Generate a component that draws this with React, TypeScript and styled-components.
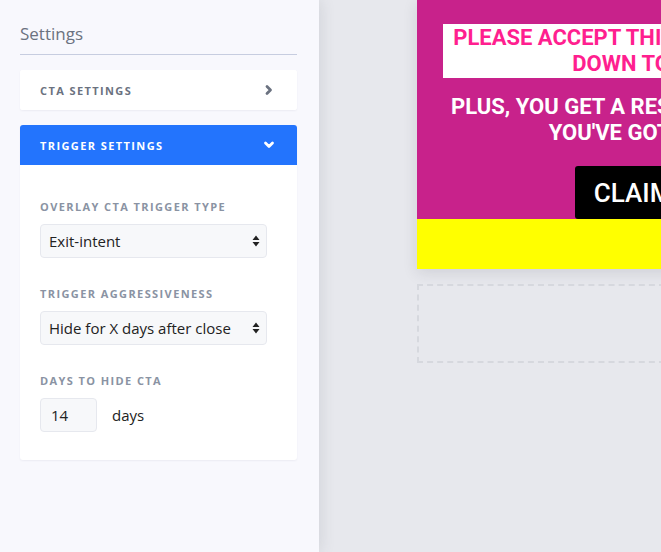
import styled, { createGlobalStyle } from "styled-components";

const Global = createGlobalStyle`
  html, body { margin: 0; padding: 0; height: 100%; }
  body { font-family: "Open Sans", "Liberation Sans", sans-serif; }
  #root { height: 100%; }
`;

const Page = styled.div`
  display: flex;
  width: 661px;
  height: 552px;
  overflow: hidden;
`;

const Sidebar = styled.aside`
  width: 319px;
  flex-shrink: 0;
  background: #f8f8fd;
  padding: 22px 22px 0 20px;
  box-sizing: border-box;
  position: relative;
  z-index: 1;
  box-shadow: 2px 0 14px rgba(60, 64, 80, 0.12);
`;

const Heading = styled.h2`
  margin: 0;
  font-size: 17px;
  font-weight: 400;
  color: #6b7280;
  line-height: 24px;
  padding-bottom: 8px;
  border-bottom: 1px solid #c7cde0;
`;

const Panel = styled.div`
  margin-top: 15px;
  background: #fff;
  border-radius: 3px;
  box-shadow: 0 1px 2px rgba(30, 40, 80, 0.06);
  overflow: hidden;
`;

const PanelHead = styled.div<{ $active?: boolean }>`
  height: 40px;
  display: flex;
  align-items: center;
  justify-content: space-between;
  padding: 0 22px 0 20px;
  background: ${(p) => (p.$active ? "#2374fd" : "#fff")};
  color: ${(p) => (p.$active ? "#fff" : "#6b7280")};
  font-size: 11px;
  font-weight: 700;
  letter-spacing: 1.4px;
  text-transform: uppercase;
`;

const PanelBody = styled.div`
  padding: 35px 20px 28px;
`;

const Field = styled.div`
  & + & { margin-top: 29px; }
`;

const Label = styled.div`
  font-size: 11px;
  font-weight: 700;
  letter-spacing: 1.4px;
  color: #8a93a3;
  text-transform: uppercase;
  line-height: 14px;
  margin-bottom: 10px;
`;

const SelectBox = styled.div`
  width: 227px;
  height: 34px;
  box-sizing: border-box;
  border: 1px solid #e6e8ee;
  border-radius: 4px;
  background: #f7f8fa;
  display: flex;
  align-items: center;
  justify-content: space-between;
  padding: 0 5px 0 8px;
  font-size: 15px;
  color: #222;
`;

const Row = styled.div`
  display: flex;
  align-items: center;
  gap: 15px;
  font-size: 15px;
  color: #222;
`;

const NumberBox = styled.div`
  width: 57px;
  height: 34px;
  box-sizing: border-box;
  border: 1px solid #e6e8ee;
  border-radius: 4px;
  background: #f7f8fa;
  display: flex;
  align-items: center;
  padding-left: 10px;
  font-size: 15px;
`;

const Canvas = styled.main`
  flex: 1;
  background: #e7e8ed;
  padding-left: 98px;
  overflow: hidden;
`;

const Widget = styled.div`
  width: 500px;
  box-shadow: 0 4px 14px rgba(40, 40, 60, 0.12);
`;

const Promo = styled.div`
  background: #c8228b;
  padding: 24px 26px 0;
  display: flex;
  flex-direction: column;
  align-items: center;
  font-family: Roboto, "Liberation Sans", sans-serif;
  font-weight: 700;
  text-transform: uppercase;
  white-space: nowrap;
`;

const Offer = styled.div`
  align-self: stretch;
  background: #fff;
  color: #ff1f8f;
  font-size: 22px;
  line-height: 26px;
  text-align: center;
  padding: 1px 0;
`;

const SubLine = styled.div`
  color: #fff;
  font-size: 22px;
  line-height: 26px;
  text-align: center;
  margin-top: 16px;
`;

const Claim = styled.div`
  margin-top: 20px;
  background: #000;
  color: #fff;
  border-radius: 3px;
  font-size: 26px;
  font-weight: 500;
  height: 53px;
  display: flex;
  align-items: center;
  padding: 0 21px 0 19px;
`;

const Strip = styled.div`
  height: 50px;
  background: #ffff00;
`;

const DropZone = styled.div`
  margin-top: 15px;
  width: 500px;
  height: 79px;
  box-sizing: border-box;
  border: 2px dashed #d6d8de;
`;

const Chevron = ({ down, color }: { down?: boolean; color: string }) => (
  <svg width="12" height="12" viewBox="0 0 12 12">
    <path
      d={down ? "M2.5 4 L6 7.5 L9.5 4" : "M4 2.5 L7.5 6 L4 9.5"}
      fill="none"
      stroke={color}
      strokeWidth="2.8"
      strokeLinecap="round"
      strokeLinejoin="round"
    />
  </svg>
);

const Updown = () => (
  <svg width="10" height="16" viewBox="0 0 10 16">
    <path d="M5 2.5 L8.5 7 H1.5 Z M5 13.5 L8.5 9 H1.5 Z" fill="#222" />
  </svg>
);

export default function App() {
  return (
    <Page>
      <Global />
      <Sidebar>
        <Heading>Settings</Heading>
        <Panel>
          <PanelHead>
            CTA Settings
            <Chevron color="#6b7280" />
          </PanelHead>
        </Panel>
        <Panel>
          <PanelHead $active>
            Trigger Settings
            <Chevron down color="#fff" />
          </PanelHead>
          <PanelBody>
            <Field>
              <Label>Overlay CTA trigger type</Label>
              <SelectBox>
                Exit-intent
                <Updown />
              </SelectBox>
            </Field>
            <Field>
              <Label>Trigger aggressiveness</Label>
              <SelectBox>
                Hide for X days after close
                <Updown />
              </SelectBox>
            </Field>
            <Field>
              <Label>Days to hide CTA</Label>
              <Row>
                <NumberBox>14</NumberBox>
                days
              </Row>
            </Field>
          </PanelBody>
        </Panel>
      </Sidebar>
      <Canvas>
        <Widget>
          <Promo>
            <Offer>
              Please accept this special discount
              <br />
              down to 50% off
            </Offer>
            <SubLine>
              Plus, you get a resource kit for free
              <br />
              you've got this now!
            </SubLine>
            <Claim>Claim now</Claim>
          </Promo>
          <Strip />
        </Widget>
        <DropZone />
      </Canvas>
    </Page>
  );
}
